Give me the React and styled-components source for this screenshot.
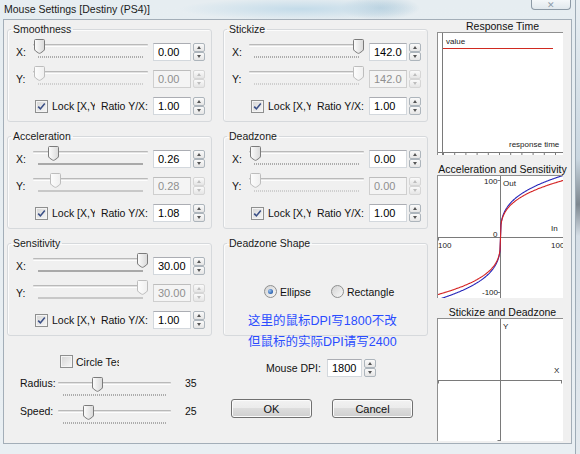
import React from 'react';
import styled, { createGlobalStyle } from 'styled-components';

const GlobalStyle = createGlobalStyle`
  html, body { margin: 0; padding: 0; }
  body {
    font-family: "Liberation Sans", Arial, sans-serif;
    font-size: 10.5px;
    color: #000;
    background: #dfe6ec;
  }
`;

const Desktop = styled.div`
  width: 580px;
  height: 454px;
  overflow: hidden;
  display: flex;
  background: linear-gradient(180deg, #e8eef2 0%, #c9d6e0 35%, #7d8790 45%, #d5dee6 52%, #e3e9ee 100%);
`;

const Window = styled.div`
  width: 576px;
  height: 454px;
  display: flex;
  flex-direction: column;
  box-sizing: border-box;
  border-right: 1px solid #9eabb6;
  background:
    radial-gradient(ellipse 120px 11px at 300px 9px, #c3dbe9 0%, rgba(195, 219, 233, 0) 100%),
    radial-gradient(ellipse 40px 12px at 380px 8px, #b8d0de 0%, rgba(184, 208, 222, 0) 100%),
    linear-gradient(180deg, #e6edf1 0%, #e9eff3 100%);
`;

const TitleBar = styled.div`
  height: 19px;
  display: flex;
  align-items: flex-start;
  justify-content: space-between;
  padding-left: 4px;
  box-sizing: border-box;
`;

const TitleText = styled.div`
  font-size: 10.5px;
  line-height: 18px;
  color: #1b1b1b;
  white-space: nowrap;
`;

const CloseBtn = styled.div`
  width: 40px;
  height: 10px;
  margin-right: 4px;
  box-sizing: border-box;
  border: 1px solid #8d9aa6;
  border-top: none;
  border-radius: 0 0 4px 4px;
  background: linear-gradient(#f4f7f9, #e1e8ed);
  display: flex;
  align-items: center;
  justify-content: center;
  color: #8e9caa;
  font-size: 9px;
  line-height: 8px;
`;

const Client = styled.div`
  margin-left: 3px;
  width: 569px;
  height: 425px;
  box-sizing: border-box;
  border: 1px solid #a3aeb8;
  background: #f0f0f0;
  display: flex;
`;

const MainArea = styled.div`
  position: relative;
  width: 430px;
  padding: 3px 0 0 3px;
  box-sizing: border-box;
  display: grid;
  grid-template-columns: 205px 205px;
  grid-template-rows: 99px 99px 99px auto;
  column-gap: 11px;
  row-gap: 8px;
`;

const GroupBox = styled.fieldset`
  margin: 0;
  padding: 0;
  min-width: 0;
  height: 99px;
  box-sizing: border-box;
  border: 1px solid #d6d9dc;
  border-radius: 3px;
  box-shadow: inset 1px 1px 0 #fcfcfc;
`;

const Legend = styled.legend`
  margin-left: 3px;
  padding: 0 2px;
  font-size: 10.5px;
  line-height: 13px;
  color: #1a1a1a;
`;

const GroupBody = styled.div`
  display: flex;
  flex-direction: column;
  gap: 9px;
  padding: 7px 6px 0 8px;
`;

const Row = styled.div`
  display: flex;
  align-items: center;
  height: 18px;
`;

const AxisLabel = styled.div`
  width: ${(p) => p.$w || 17}px;
  flex: none;
  color: #111;
  white-space: nowrap;
`;

const SliderBox = styled.div`
  position: relative;
  width: ${(p) => p.$w}px;
  height: 18px;
  flex: none;
  align-self: flex-start;
  margin-top: ${(p) => p.$offset || 0}px;
  display: flex;
  flex-direction: column;
  padding-top: 1px;
  box-sizing: border-box;
`;

const Track = styled.div`
  height: 1px;
  border-top: 1px solid #b9b9b9;
  border-bottom: 1px solid #fdfdfd;
  background: #e2e2e2;
  border-radius: 1px;
`;

const Ticks = styled.div`
  margin: 9px 5px 0;
  height: 2px;
  background: ${(p) =>
    p.$dense
      ? p.$disabled ? '#c8c8c8' : '#a9a9a9'
      : `repeating-linear-gradient(90deg, ${p.$disabled ? '#cfcfcf' : '#acacac'} 0 1px, transparent 1px 2px)`};
`;

const Thumb = styled.svg`
  position: absolute;
  top: -4px;
  width: 11px;
  height: 15px;
`;

const NumBox = styled.input`
  width: ${(p) => p.$w || 38}px;
  height: 18px;
  flex: none;
  margin: 0 0 0 ${(p) => (p.$ml === undefined ? 5 : p.$ml)}px;
  box-sizing: border-box;
  padding: 0 4px;
  font: 11px "Liberation Sans", Arial, sans-serif;
  border: 1px solid ${(p) => (p.$disabled ? '#cfcfcf' : '#d3d8dd')};
  border-top-color: ${(p) => (p.$disabled ? '#bdbdbd' : '#abadb3')};
  background: ${(p) => (p.$disabled ? '#f4f4f4' : '#fff')};
  color: ${(p) => (p.$disabled ? '#8f8f8f' : '#000')};
  outline: none;
`;

const Spin = styled.div`
  width: 12px;
  height: 18px;
  margin-left: 2px;
  flex: none;
  display: flex;
  flex-direction: column;
`;

const SpinHalf = styled.div`
  flex: 1;
  box-sizing: border-box;
  border: 1px solid ${(p) => (p.$disabled ? '#d6d6d6' : '#adb5bc')};
  border-radius: 2px;
  background: linear-gradient(#fafafa, #e5e5e5);
  display: flex;
  align-items: center;
  justify-content: center;
`;

const Arrow = styled.span`
  width: 0;
  height: 0;
  border-left: 2.5px solid transparent;
  border-right: 2.5px solid transparent;
  ${(p) => (p.$down ? 'border-top' : 'border-bottom')}: 3px solid ${(p) => (p.$disabled ? '#bdbdbd' : '#555')};
`;

const Check = styled.div`
  width: 13px;
  height: 13px;
  flex: none;
  margin-left: ${(p) => p.$ml || 0}px;
  box-sizing: border-box;
  border: 1px solid #8e8f8f;
  background: linear-gradient(135deg, #d5d5d5 0%, #f7f7f7 100%);
  box-shadow: inset 0 0 0 1px #f4f4f4;
  display: flex;
  align-items: center;
  justify-content: center;
`;

const ClipText = styled.div`
  width: ${(p) => p.$w}px;
  margin-left: ${(p) => p.$ml || 0}px;
  overflow: hidden;
  white-space: nowrap;
  flex: none;
  color: #111;
`;

const RatioText = styled.div`
  flex: 1;
  text-align: right;
  padding-right: 5px;
  white-space: nowrap;
  color: #111;
`;

const Radio = styled.div`
  width: 13px;
  height: 13px;
  flex: none;
  margin-left: ${(p) => p.$ml || 0}px;
  box-sizing: border-box;
  border-radius: 50%;
  border: 1px solid #8e8f8f;
  background: linear-gradient(135deg, #d3d3d3 0%, #f8f8f8 100%);
  display: flex;
  align-items: center;
  justify-content: center;
  &::after {
    content: '';
    display: ${(p) => (p.$on ? 'block' : 'none')};
    width: 5px;
    height: 5px;
    border-radius: 50%;
    background: radial-gradient(circle at 35% 35%, #9cc4f0 0%, #2b62b0 70%, #1d4d8f 100%);
  }
`;

const RadioRow = styled.div`
  display: flex;
  align-items: center;
  height: 13px;
  padding: 35px 0 0 40px;
`;

const RadioLabel = styled.span`
  margin-left: 3px;
  color: #111;
`;

const Annotation = styled.div`
  position: absolute;
  left: 244px;
  top: 291px;
  font-family: "Liberation Sans", "Noto Sans CJK SC", sans-serif;
  font-size: 12.5px;
  line-height: 21px;
  color: #2a4cff;
  white-space: nowrap;
`;

const BottomLeft = styled.div`
  display: flex;
  flex-direction: column;
`;

const CircleRow = styled.div`
  display: flex;
  align-items: center;
  margin: 11px 0 0 53px;
  height: 13px;
`;

const ValueRow = styled.div`
  display: flex;
  align-items: flex-start;
  padding-left: 13px;
  margin-top: ${(p) => p.$mt}px;
  height: 22px;
`;

const ValueLabel = styled.div`
  width: 38px;
  line-height: 13px;
  color: #111;
`;

const ValueText = styled.div`
  margin-left: 14px;
  line-height: 13px;
  color: #111;
`;

const BottomRight = styled.div`
  display: flex;
  flex-direction: column;
`;

const DpiRow = styled.div`
  display: flex;
  align-items: center;
  height: 18px;
  margin: 15px 0 0 43px;
`;

const ButtonRow = styled.div`
  display: flex;
  gap: 20px;
  margin: 22px 0 0 8px;
`;

const Btn = styled.button`
  width: 81px;
  height: 19px;
  padding: 0;
  box-sizing: border-box;
  border: 1px solid #707070;
  border-radius: 3px;
  background: linear-gradient(#f2f2f2 0%, #ebebeb 49%, #dddddd 50%, #cfcfcf 100%);
  box-shadow: inset 0 0 0 1px #fbfbfb;
  font: 11px "Liberation Sans", Arial, sans-serif;
  color: #111;
`;

const ChartColumn = styled.div`
  width: 137px;
  display: flex;
  flex-direction: column;
  gap: 8px;
`;

const ChartBlock = styled.div`
  display: flex;
  flex-direction: column;
`;

const ChartTitle = styled.div`
  text-align: center;
  font-size: 10.5px;
  line-height: 12px;
  color: #111;
  white-space: nowrap;
`;

const ChartBox = styled.div`
  margin-left: 3px;
  width: 126px;
  height: 123px;
  box-sizing: border-box;
  background: #fff;
  border-top: 1px solid #8f8f8f;
  border-left: 1px solid #8f8f8f;
  overflow: hidden;
  svg { display: block; }
`;

const chartText = { fontFamily: '"Liberation Sans", Arial, sans-serif', fontSize: 8, fill: '#222' };

function Slider({ pos, width = 115, disabled, dense, offset }) {
  const id = React.useId();
  const left = Math.round(pos * (width - 12)) + 1;
  return (
    <SliderBox $w={width} $offset={offset}>
      <Track />
      <Ticks $dense={dense} $disabled={disabled} />
      <Thumb style={{ left }} viewBox="0 0 11 15">
        <defs>
          <linearGradient id={id} x1="0" y1="0" x2="1" y2="0">
            <stop offset="0" stopColor="#fdfdfd" />
            <stop offset="1" stopColor={disabled ? '#efefef' : '#d9d9d9'} />
          </linearGradient>
        </defs>
        <path
          d="M1.5 0.5 H9.5 Q10.5 0.5 10.5 1.5 V10 Q10.5 11 9.5 12 L6.5 14 Q5.5 14.7 4.5 14 L1.5 12 Q0.5 11 0.5 10 V1.5 Q0.5 0.5 1.5 0.5 Z"
          fill={`url(#${id})`}
          stroke={disabled ? '#bdbdbd' : '#7b7b7b'}
        />
      </Thumb>
    </SliderBox>
  );
}

function Spinner({ disabled }) {
  return (
    <Spin>
      <SpinHalf $disabled={disabled}><Arrow $disabled={disabled} /></SpinHalf>
      <SpinHalf $disabled={disabled}><Arrow $down $disabled={disabled} /></SpinHalf>
    </Spin>
  );
}

function CheckBox({ checked, ml }) {
  return (
    <Check $ml={ml}>
      {checked && (
        <svg width="9" height="9" viewBox="0 0 9 9">
          <path d="M1.2 4.6 L3.4 6.9 L7.8 1.6" fill="none" stroke="#3a4f86" strokeWidth="1.6" />
        </svg>
      )}
    </Check>
  );
}

function AxisGroup({ g }) {
  return (
    <GroupBox>
      <Legend>{g.title}</Legend>
      <GroupBody>
        <Row>
          <AxisLabel>X:</AxisLabel>
          <Slider pos={g.xp} dense={g.dense} />
          <NumBox readOnly value={g.x} />
          <Spinner />
        </Row>
        <Row>
          <AxisLabel>Y:</AxisLabel>
          <Slider pos={g.yp} dense={g.dense} disabled />
          <NumBox readOnly value={g.y} $disabled />
          <Spinner disabled />
        </Row>
        <Row>
          <AxisLabel />
          <CheckBox checked ml={2} />
          <ClipText $w={43} $ml={4}>Lock [X,Y]</ClipText>
          <RatioText>Ratio Y/X:</RatioText>
          <NumBox readOnly value={g.ratio} $ml={0} />
          <Spinner />
        </Row>
      </GroupBody>
    </GroupBox>
  );
}

const groups = [
  { title: 'Smoothness', x: '0.00', y: '0.00', xp: 0, yp: 0, ratio: '1.00' },
  { title: 'Stickize', x: '142.00', y: '142.00', xp: 1, yp: 1, ratio: '1.00' },
  { title: 'Acceleration', x: '0.26', y: '0.28', xp: 0.135, yp: 0.16, ratio: '1.08', dense: true },
  { title: 'Deadzone', x: '0.00', y: '0.00', xp: 0, yp: 0, ratio: '1.00' },
  { title: 'Sensitivity', x: '30.00', y: '30.00', xp: 1, yp: 1, ratio: '1.00', dense: true },
];

const curve = (amp, p, cx, cy) => {
  const pts = [];
  for (let i = 0; i <= 250; i++) {
    const x = i / 2;
    const dx = x - cx;
    const t = Math.min(Math.abs(dx) / cx, 1.05);
    const dy = amp * Math.pow(t, p) * Math.sign(dx);
    pts.push(`${x.toFixed(1)},${(cy - dy).toFixed(1)}`);
  }
  return 'M' + pts.join(' L');
};

function ResponseChart() {
  const ticks = Array.from({ length: 11 }, (_, i) => 5.5 + i * 11.2);
  return (
    <svg width="125" height="122">
      <line x1="4.5" y1="0" x2="4.5" y2="122" stroke="#7a7a7a" />
      <line x1="0" y1="119.5" x2="125" y2="119.5" stroke="#7a7a7a" />
      {ticks.map((t) => (
        <line key={t} x1={t} y1="119.5" x2={t} y2="122" stroke="#7a7a7a" />
      ))}
      <line x1="5" y1="15.5" x2="115" y2="15.5" stroke="#d02a20" />
      <text x="8" y="11" style={chartText}>value</text>
      <text x="71" y="114" style={chartText}>response time</text>
    </svg>
  );
}

function AccelChart() {
  const cx = 62.5;
  const cy = 61.5;
  return (
    <svg width="125" height="122">
      <line x1={cx} y1="0" x2={cx} y2="122" stroke="#7a7a7a" />
      <line x1="0" y1={cy} x2="125" y2={cy} stroke="#7a7a7a" />
      <line x1="59.5" y1="4.5" x2={cx} y2="4.5" stroke="#7a7a7a" />
      <line x1="59.5" y1="116.5" x2={cx} y2="116.5" stroke="#7a7a7a" />
      <line x1="0.5" y1={cy} x2="0.5" y2={cy + 3} stroke="#7a7a7a" />
      <path d={curve(62, 0.32, cx, cy)} fill="none" stroke="#2424b8" strokeWidth="1.1" />
      <path d={curve(57, 0.31, cx, cy)} fill="none" stroke="#d42222" strokeWidth="1.1" />
      <text x="46" y="7.5" style={chartText}>100</text>
      <text x="65" y="10" style={chartText}>Out</text>
      <text x="55" y="61" style={chartText}>0</text>
      <text x="113" y="55" style={chartText}>In</text>
      <text x="0" y="72" style={chartText}>100</text>
      <text x="113" y="72" style={chartText}>100</text>
      <text x="44" y="119" style={chartText}>-100</text>
    </svg>
  );
}

function StickChart() {
  const cx = 62.5;
  const cy = 61.5;
  return (
    <svg width="125" height="122">
      <line x1={cx} y1="0" x2={cx} y2="122" stroke="#7a7a7a" />
      <line x1="0" y1={cy} x2="124" y2={cy} stroke="#7a7a7a" />
      <line x1="123.5" y1={cy} x2="123.5" y2={cy + 3} stroke="#7a7a7a" />
      <line x1="0.5" y1={cy} x2="0.5" y2={cy + 3} stroke="#7a7a7a" />
      <line x1="59.5" y1="121.5" x2={cx} y2="121.5" stroke="#7a7a7a" />
      <text x="65" y="10" style={chartText}>Y</text>
      <text x="116" y="54" style={chartText}>X</text>
    </svg>
  );
}

export default function App() {
  return (
    <>
      <GlobalStyle />
      <Desktop>
        <Window>
          <TitleBar>
            <TitleText>Mouse Settings [Destiny (PS4)]</TitleText>
            <CloseBtn>✕</CloseBtn>
          </TitleBar>
          <Client>
            <MainArea>
              {groups.map((g) => (
                <AxisGroup key={g.title} g={g} />
              ))}
              <GroupBox>
                <Legend>Deadzone Shape</Legend>
                <RadioRow>
                  <Radio $on />
                  <RadioLabel>Ellipse</RadioLabel>
                  <Radio $ml={20} />
                  <RadioLabel>Rectangle</RadioLabel>
                </RadioRow>
              </GroupBox>
              <BottomLeft>
                <CircleRow>
                  <CheckBox />
                  <ClipText $w={43} $ml={3}>Circle Test</ClipText>
                </CircleRow>
                <ValueRow $mt={9}>
                  <ValueLabel>Radius:</ValueLabel>
                  <Slider pos={0.33} width={113} offset={4} />
                  <ValueText>35</ValueText>
                </ValueRow>
                <ValueRow $mt={6}>
                  <ValueLabel>Speed:</ValueLabel>
                  <Slider pos={0.24} width={113} offset={4} />
                  <ValueText>25</ValueText>
                </ValueRow>
              </BottomLeft>
              <BottomRight>
                <DpiRow>
                  <AxisLabel $w={52}>Mouse DPI:</AxisLabel>
                  <NumBox readOnly value="1800" $w={35} $ml={9} />
                  <Spinner />
                </DpiRow>
                <ButtonRow>
                  <Btn>OK</Btn>
                  <Btn>Cancel</Btn>
                </ButtonRow>
              </BottomRight>
              <Annotation>
                这里的鼠标DPI写1800不改
                <br />
                但鼠标的实际DPI请写2400
              </Annotation>
            </MainArea>
            <ChartColumn>
              <ChartBlock>
                <ChartTitle>Response Time</ChartTitle>
                <ChartBox><ResponseChart /></ChartBox>
              </ChartBlock>
              <ChartBlock>
                <ChartTitle>Acceleration and Sensitivity</ChartTitle>
                <ChartBox><AccelChart /></ChartBox>
              </ChartBlock>
              <ChartBlock>
                <ChartTitle>Stickize and Deadzone</ChartTitle>
                <ChartBox><StickChart /></ChartBox>
              </ChartBlock>
            </ChartColumn>
          </Client>
        </Window>
      </Desktop>
    </>
  );
}
